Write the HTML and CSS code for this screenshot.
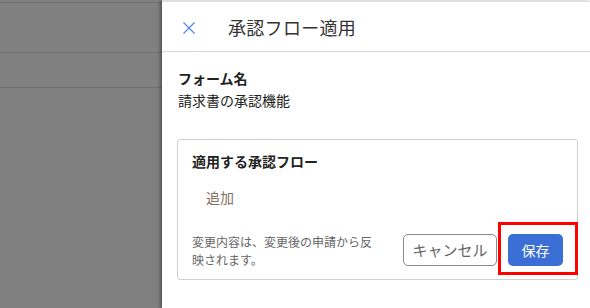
FILE: index.html
```html
<!DOCTYPE html>
<html lang="ja">
<head>
<meta charset="utf-8">
<link rel="stylesheet" href="styles.css">
</head>
<body>
<div class="page">
  <div class="backdrop">
    <div class="bd-row r1"></div>
    <div class="bd-row r2"></div>
    <div class="bd-row r3"></div>
  </div>
  <div class="panel">
    <div class="header">
      <svg class="close" width="12" height="12" viewBox="0 0 12 12"><path d="M0.5 0.5 L11.5 11.5 M11.5 0.5 L0.5 11.5" stroke="#4d82e6" stroke-width="1.1" fill="none"/></svg>
      <div class="title">承認フロー適用</div>
    </div>
    <div class="body">
      <div class="label">フォーム名</div>
      <div class="value">請求書の承認機能</div>
      <div class="card">
        <div class="card-title">適用する承認フロー</div>
        <div class="add">追加</div>
        <div class="footer">
          <div class="note">変更内容は、変更後の申請から反映されます。</div>
          <div class="actions">
            <button class="btn cancel">キャンセル</button>
            <div class="save-wrap">
              <button class="btn save">保存</button>
              <div class="highlight"></div>
            </div>
          </div>
        </div>
      </div>
    </div>
  </div>
</div>
</body>
</html>
```
FILE: styles.css
```css
* { box-sizing: border-box; }
html, body { margin: 0; padding: 0; }
body {
  font-family: "Noto Sans CJK JP", "Noto Sans", sans-serif;
  color: #222;
  width: 590px;
  height: 308px;
  overflow: hidden;
}
.page {
  display: flex;
  height: 308px;
}
.backdrop {
  width: 162px;
  flex: none;
  background: #808080;
}
.bd-row { border-bottom: 1px solid #6f6f6f; }
.r1 { height: 3px; }
.r2 { height: 50px; }
.r3 { height: 35px; }
.panel {
  flex: 1;
  background: #fff;
  border-top: 1px solid #e0e0e0;
  margin-top: 1px;
  box-shadow: -2px 0 3px rgba(0,0,0,0.35);
  position: relative;
}
.header {
  height: 50px;
  border-bottom: 1px solid #d9d9d9;
  display: flex;
  align-items: center;
  padding-left: 21px;
}
.close { flex: none; margin-top: 2px; }
.title {
  margin-left: 33px;
  font-size: 18px;
  color: #333;
  letter-spacing: 0.3px;
}
.body {
  padding: 15px 12px 0 16px;
}
.label {
  font-size: 14px;
  font-weight: bold;
  line-height: 22px;
  color: #222;
}
.value {
  font-size: 14px;
  line-height: 22px;
  color: #222;
}
.card {
  margin-top: 28px;
  margin-left: -1px;
  border: 1px solid #cfcfcf;
  border-radius: 3px;
  padding: 10px 14px 10px 14px;
}
.card-title {
  font-size: 14px;
  font-weight: bold;
  line-height: 22px;
}
.add {
  margin-top: 14px;
  padding-left: 14px;
  font-size: 14px;
  line-height: 22px;
  color: #86705f;
}
.footer {
  margin-top: 25px;
  display: flex;
  justify-content: space-between;
  align-items: center;
}
.note {
  width: 186px;
  font-size: 12px;
  line-height: 18px;
  color: #666;
}
.actions {
  display: flex;
  align-items: center;
  gap: 11px;
  margin-top: -3px;
}
.btn {
  font-family: inherit;
  font-size: 14px;
  height: 32px;
  border-radius: 5px;
  cursor: pointer;
}
.cancel {
  width: 94px;
  background: #fff;
  border: 1px solid #8a8a8a;
  color: #666;
  font-size: 15px;
}
.save-wrap { position: relative; }
.save {
  display: block;
  width: 55px;
  background: #3b6fd6;
  border: none;
  color: #fff;
}
.highlight {
  position: absolute;
  top: -12px;
  left: -10px;
  right: -15px;
  bottom: -9px;
  border: 3px solid #ff0000;
  pointer-events: none;
}
```
